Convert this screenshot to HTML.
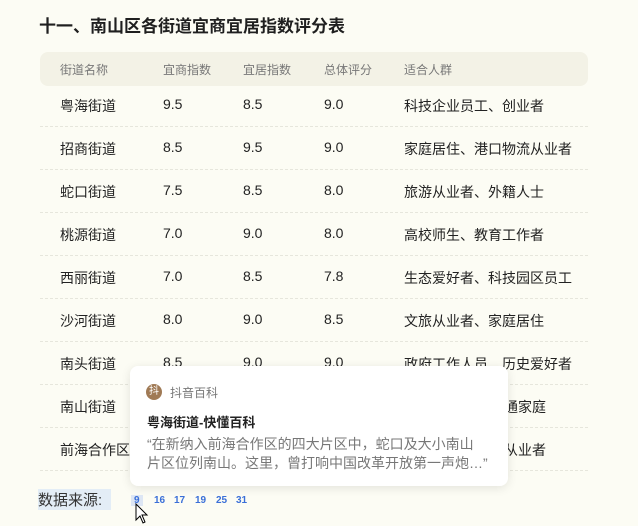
<!DOCTYPE html>
<html><head><meta charset="utf-8"><style>
body{margin:0;width:638px;height:526px;overflow:hidden;background:#fcfcf4;font-family:"Liberation Sans","Noto Sans CJK SC",sans-serif;position:relative}
h1{position:absolute;left:39px;top:12px;margin:0;font-size:17px;font-weight:bold;color:#1f1f1f}
.hdr{position:absolute;left:40px;top:52px;width:548px;height:34px;background:#f3f2e6;border-radius:8px}
.c{position:absolute;font-size:14px;line-height:20px;height:20px;color:#222;white-space:nowrap}
.h{font-size:12px;color:#777}
.sep{position:absolute;left:40px;width:548px;border-top:1px dashed #e6e6dc}
.pop{position:absolute;left:130px;top:366px;width:378px;height:120px;background:#fff;border-radius:8px;box-shadow:0 2px 10px rgba(0,0,0,0.1)}
.src{position:absolute;left:38px;top:489px;font-size:15px;color:#333;background:#e3edf6}
.n{position:absolute;top:495px;font-size:10px;font-weight:bold;color:#3a6fd8}
</style></head><body>
<h1>十一、南山区各街道宜商宜居指数评分表</h1>
<div class="hdr"></div>
<div class="c h" style="left:60px;top:60px">街道名称</div>
<div class="c h" style="left:163px;top:60px">宜商指数</div>
<div class="c h" style="left:243px;top:60px">宜居指数</div>
<div class="c h" style="left:324px;top:60px">总体评分</div>
<div class="c h" style="left:404px;top:60px">适合人群</div>
<div id="rows"></div>
<script>
var d=[["粤海街道","9.5","8.5","9.0","科技企业员工、创业者"],["招商街道","8.5","9.5","9.0","家庭居住、港口物流从业者"],["蛇口街道","7.5","8.5","8.0","旅游从业者、外籍人士"],["桃源街道","7.0","9.0","8.0","高校师生、教育工作者"],["西丽街道","7.0","8.5","7.8","生态爱好者、科技园区员工"],["沙河街道","8.0","9.0","8.5","文旅从业者、家庭居住"],["南头街道","8.5","9.0","9.0","政府工作人员、历史爱好者"],["南山街道","","","","本地居民、普通家庭"],["前海合作区","","","","金融服务从业者"]];
var xs=[60,163,243,324,404],h="";
d.forEach(function(r,i){var y=96+i*43;r.forEach(function(t,j){var st=(j==4&&i>6)?'right:92px':'left:'+xs[j]+'px';h+='<div class="c" style="'+st+';top:'+(j>0&&j<4?y-2:y)+'px">'+t+'</div>'});h+='<div class="sep" style="top:'+(y+30)+'px"></div>'});
document.getElementById('rows').innerHTML=h;
</script>
<div class="pop">
<div style="position:absolute;left:16px;top:18px;width:16px;height:16px;border-radius:50%;background:#a07a55;color:#fff;font-size:10px;text-align:center;line-height:16px">抖</div>
<div style="position:absolute;left:40px;top:18px;font-size:12px;color:#777">抖音百科</div>
<div style="position:absolute;left:17px;top:46px;font-size:13px;font-weight:bold;color:#222">粤海街道-快懂百科</div>
<div style="position:absolute;left:17px;top:69px;white-space:nowrap;font-size:14px;line-height:19px;color:#777">“在新纳入前海合作区的四大片区中，蛇口及大小南山<br>片区位列南山。这里，曾打响中国改革开放第一声炮…”</div>
</div>
<div class="src">数据来源:&nbsp;&nbsp;</div>
<div class="n" style="left:131px;background:#dde6f4;padding:0 3px">9</div>
<div class="n" style="left:154px">16</div>
<div class="n" style="left:174px">17</div>
<div class="n" style="left:195px">19</div>
<div class="n" style="left:216px">25</div>
<div class="n" style="left:236px">31</div>
<svg style="position:absolute;left:135px;top:503px" width="14" height="22"><path d="M1 1 L1 17 L5 13 L8 20 L10 19 L7 12 L12 12 Z" fill="#fff" stroke="#000" stroke-width="1"/></svg>
</body></html>
